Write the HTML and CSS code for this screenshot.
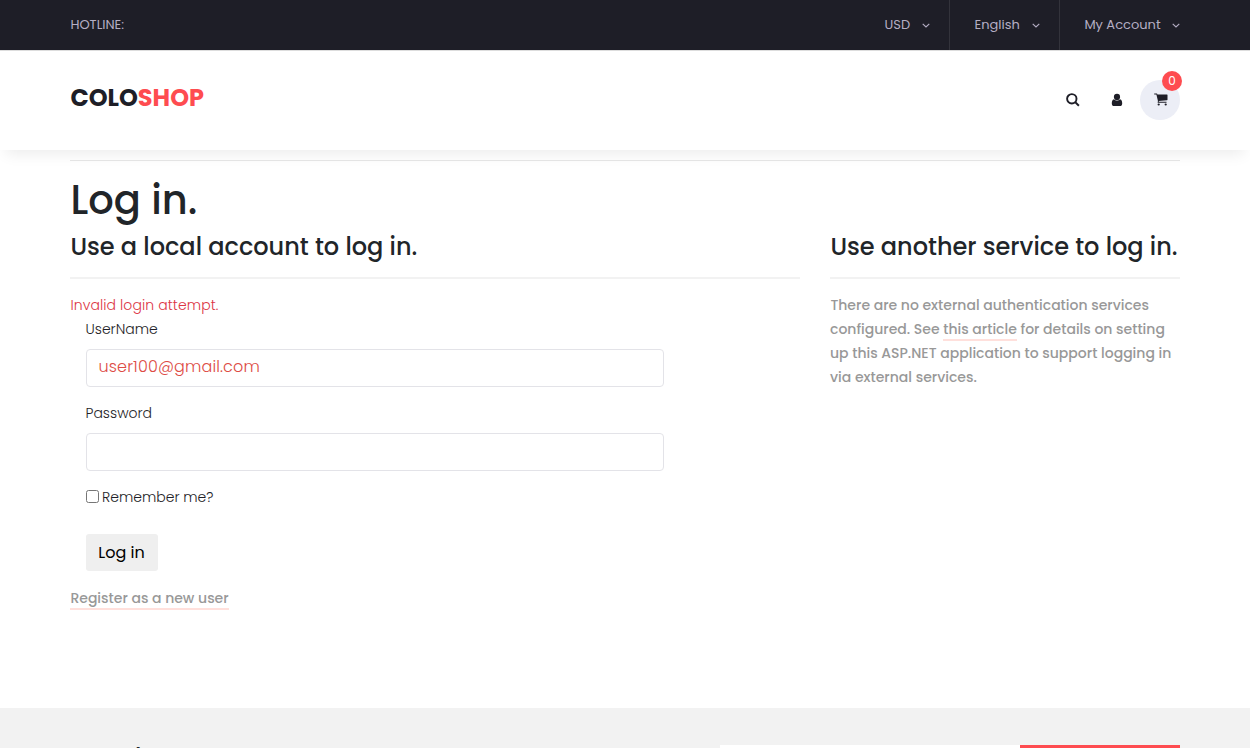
FILE: index.html
```html
<!DOCTYPE html>
<html lang="en">
<head>
<meta charset="utf-8">
<title>Log in</title>
<link rel="stylesheet" href="styles.css">
</head>
<body>
<header class="site-header">
  <div class="topbar">
    <div class="container topbar-row">
      <span class="hotline">HOTLINE:</span>
      <nav class="top-menu">
        <a class="top-item usd"><span>USD</span><svg class="chev" viewBox="0 0 8 5"><path d="M.7.8 4 4 7.3.8"/></svg></a>
        <a class="top-item lang"><span>English</span><svg class="chev" viewBox="0 0 8 5"><path d="M.7.8 4 4 7.3.8"/></svg></a>
        <a class="top-item account"><span>My Account</span><svg class="chev" viewBox="0 0 8 5"><path d="M.7.8 4 4 7.3.8"/></svg></a>
      </nav>
    </div>
  </div>
  <div class="mainbar">
    <div class="container mainbar-row">
      <a class="logo"><span>COLO</span><span class="logo-accent">SHOP</span></a>
      <div class="tools">
        <svg class="tool search" viewBox="0 0 14 14"><circle cx="5.8" cy="5.8" r="4.7"/><path d="M9.3 9.3l3.6 3.5"/></svg>
        <svg class="tool user" viewBox="0 0 12 14"><circle cx="6" cy="3.9" r="3.1"/><path d="M3 6.2C1.3 6.7.8 8.500.8 10.400.8 12 1.700 13 3 13h6c1.300 0 2.200-1 2.200-2.600 0-1.900-.5-3.700-2.200-4.200C8.200 7 7.200 7.500 6 7.500S3.800 7 3 6.200z"/></svg>
        <a class="cart"><svg viewBox="0 0 14 13"><path d="M.5 0.500h2.200c.4 0 .6.300.7 1H13c.3 0 .5.200.5.500v4.700c0 .3-.2.500-.5.500l-8.300.8.2.800h7.600v1H4.100c-.5 0-.7-.4-.5-.8l.4-.800L2.400 1.500H.5C-.1 1.500-.1.500.5.500z"/><circle cx="4.700" cy="11.500" r="1.100"/><circle cx="11.700" cy="11.500" r="1.100"/></svg><span class="badge">0</span></a>
      </div>
    </div>
  </div>
</header>
<main class="container page">
  <h1>Log in.</h1>
  <div class="columns">
    <section class="local">
      <h4>Use a local account to log in.</h4>
      <form>
        <p class="error">Invalid login attempt.</p>
        <div class="fields">
          <label for="user">UserName</label>
          <input class="control" id="user" type="text" value="user100@gmail.com">
          <label for="pass">Password</label>
          <input class="control" id="pass" type="password">
          <div class="remember"><input id="remember" type="checkbox"><label for="remember">Remember me?</label></div>
          <button class="submit" type="button">Log in</button>
        </div>
        <p class="register"><a class="link">Register as a new user</a></p>
      </form>
    </section>
    <section class="external">
      <h4>Use another service to log in.</h4>
      <p class="note">There are no external authentication services configured. See <a class="link">this article</a> for details on setting up this ASP.NET application to support logging in via external services.</p>
    </section>
  </div>
</main>
<footer class="newsletter">
  <div class="container newsletter-row">
    <h4 class="h-news">Newsletter</h4>
    <div class="subscribe"><div class="email"></div><div class="subscribe-btn"></div></div>
  </div>
</footer>
</body>
</html>
```
FILE: styles.css
```css
* { box-sizing: border-box; }
body { margin: 0; height: 748px; overflow: hidden; background: #fff; color: #1e1e27; font: 400 14px/24px Poppins, Inter, "Open Sans", sans-serif; }
h1, h4, p { margin: 0; }
.container { width: 1110px; margin: 0 auto; }
.site-header { position: relative; box-shadow: 0 10px 14px -6px rgba(0,0,0,.08); }
.topbar { height: 50px; background: #1e1e27; color: #b5aec4; font-size: 13px; line-height: 50px; }
.topbar-row, .top-menu, .mainbar-row, .tools { display: flex; }
.topbar-row { justify-content: space-between; }
.hotline, .logo, h1, h4, .error, .note, .register { text-indent: .4px; }
.top-item { display: flex; align-items: center; justify-content: space-between; border-right: 1px solid #33333b; height: 50px; }
.usd { width: 86px; padding: 0 19.5px 0 20.5px; }
.lang { width: 110px; padding: 0 19.5px 0 24.5px; }
.account { width: 120px; padding-left: 24.4px; border: 0; }
.chev { width: 8px; height: 5px; fill: none; stroke: #b5aec4; stroke-width: 1.1; }
.mainbar { height: 100px; background: #fff; border-top: 1px solid #ddd; }
.mainbar-row { height: 98px; align-items: center; justify-content: space-between; }
.logo { font-size: 24px; font-weight: 600; line-height: 36px; padding-bottom: 4px; }
.logo { font-weight: 700; }
.logo-accent { color: #fe4c50; }
.tools { align-items: center; }
.tool { fill: #1e1e27; }
.search { width: 14px; height: 14px; fill: none; stroke: #1e1e27; stroke-width: 1.9; margin: 0 31px 1px 0; }
.user { width: 12px; height: 14px; margin: 0 17.500px 1px 0; }
.cart { position: relative; width: 40px; height: 40px; border-radius: 50%; background: #eceef6; display: flex; align-items: center; justify-content: center; padding: 0 0 1px 1px; }
.cart svg { width: 14px; height: 13px; fill: #1e1e27; }
.badge { position: absolute; top: -9px; right: -2px; width: 20px; height: 20px; border-radius: 50%; background: #fe4c50; color: #fff; font-size: 12px; line-height: 20px; text-align: center; text-indent: 0; }
.page { margin-top: 10px; border-top: 1px solid #e7e7e7; padding-top: 15px; height: 548px; }
h1 { font-size: 40px; line-height: 48px; font-weight: 500; color: #212529; }
h4 { font-size: 24px; line-height: 29px; font-weight: 500; color: #212529; }
.columns { display: grid; grid-template-columns: 730px 350px; gap: 30px; margin-top: 8px; }
.columns h4 { padding-bottom: 16px; border-bottom: 2px solid #f2f2f2; margin-bottom: 14px; }
.error { color: #dc3545; font-weight: 300; letter-spacing: .1px; }
.fields { padding-left: 15.5px; display: flex; flex-direction: column; align-items: flex-start; }
label { font-weight: 300; }
.control { width: 578px; height: 38px; margin: 7.5px 0 14.5px; padding: 0 12px 2px; border: 1px solid #e3e3e8; border-radius: 4px; font: 300 16px/24px Poppins, Inter, sans-serif; letter-spacing: .14px; color: #dd4b44; }
.remember { display: flex; align-items: center; }
.remember input { width: 13px; height: 13px; margin: 0 3.5px 2px 0; }
.submit { width: 72px; height: 37px; margin: 25px 0 15px; padding: 0; border: 0; border-radius: 3px; background: #efefef; color: #000; font: 400 16px/24px Poppins, Inter, sans-serif; }
.note, .register { color: #989898; font-weight: 500; }
.link { box-shadow: 0 2px 0 #ffe0dc; text-indent: 0; }
.newsletter { height: 40px; background: #f2f2f2; overflow: hidden; }
.newsletter-row { display: flex; justify-content: space-between; align-items: flex-start; }
.h-news { padding-top: 35px; }
.subscribe { display: flex; margin-top: 37px; }
.email { width: 300px; height: 46px; background: #fff; }
.subscribe-btn { width: 160px; height: 46px; background: #fe4c50; }
```
